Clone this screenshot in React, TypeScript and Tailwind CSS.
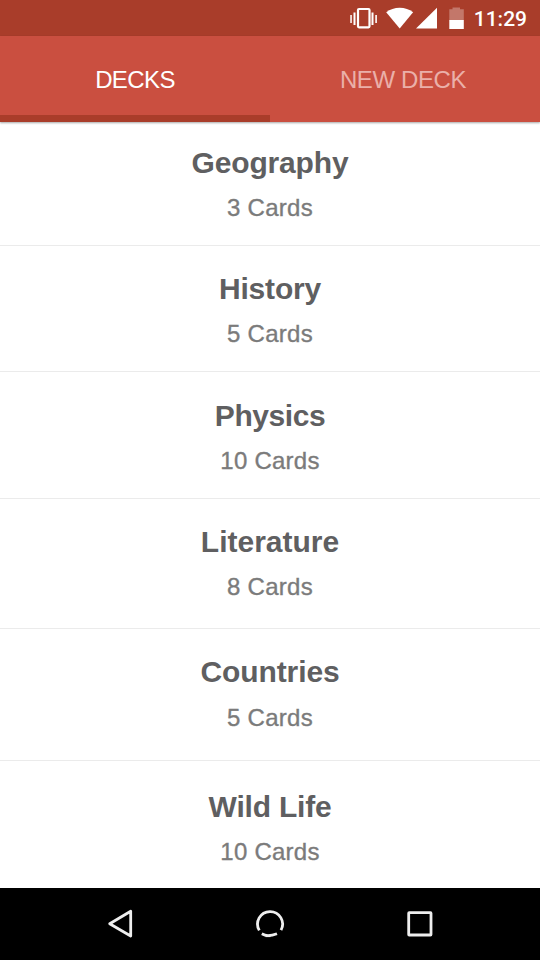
type Deck = { name: string; count: number; row: string; gap: string; title: string };

const decks: Deck[] = [
  { name: "Geography", count: 3, row: "h-[124px] pt-[26px]", gap: "mt-[18px]", title: "tracking-[-0.15px]" },
  { name: "History", count: 5, row: "h-[126px] pt-[28px]", gap: "mt-[18px]", title: "tracking-[-0.2px]" },
  { name: "Physics", count: 10, row: "h-[127px] pt-[29px]", gap: "mt-[18px]", title: "tracking-[-0.45px]" },
  { name: "Literature", count: 8, row: "h-[130px] pt-[28px]", gap: "mt-[18px]", title: "tracking-[0px]" },
  { name: "Countries", count: 5, row: "h-[132px] pt-[28px]", gap: "mt-[19px]", title: "tracking-[-0.1px]" },
  { name: "Wild Life", count: 10, row: "h-[127px] pt-[31px] border-b-0", gap: "mt-[18px]", title: "tracking-[-0.2px]" },
];

function StatusBar() {
  return (
    <div className="flex h-9 items-center justify-end bg-[#a93d2a] pr-[13px]">
      <svg width="118" height="36" viewBox="348 0 118 36" fill="#fff" className="mr-[8px]">
        <path d="M350.300 15h1.500v8h-1.500zM353.500 12.500h2v12.500h-2zM371.500 12.500h2v12.500h-2zM375.300 15h1.600v8h-1.600z" />
        <rect x="358" y="9" width="11.500" height="18.300" rx="1" fill="none" stroke="#fff" strokeWidth="2.200" />
        <path d="M386.200 12.200C393.500 6.200 405.900 6.200 413.100 12.200L399.700 28.500Z" />
        <path d="M437 7.800V28.500H416Z" />
        <path d="M449.300 9.300h3.200V7.400h7.500v1.900h3.800v11h-14.500z" opacity=".3" />
        <path d="M449.300 20h14.500v9h-14.500z" />
      </svg>
      <span className="pt-[2px] font-[Roboto] text-[21px] leading-6 font-medium text-white">11:29</span>
    </div>
  );
}

function Tabs() {
  return (
    <div className="relative z-10 flex h-[86px] bg-[#ca4f40] text-[24px] leading-6 shadow-[0_1px_2px_rgba(0,0,0,0.35)]">
      <div className="h-full w-1/2 border-b-[7px] border-[#a93d2a] pt-8 text-center tracking-[-0.6px] text-white">DECKS</div>
      <div className="h-full w-1/2 pt-8 pr-[4px] text-center tracking-[-0.4px] text-[#eab0a9]">NEW DECK</div>
    </div>
  );
}

function NavigationBar() {
  return (
    <div className="flex h-[72px] items-center justify-center bg-black">
      <svg width="540" height="72" viewBox="0 888 540 72" fill="none" stroke="#eee" strokeWidth="2.800">
        <path d="M130.700 911.200V936L109.700 923.700Z" strokeLinejoin="round" />
        <path d="M259.300 930.400A12.500 12.500 0 1 1 281 930.100" />
        <path d="M261.800 933.700Q265 935.400 268 935.600Q272 935.500 277 933.700" />
        <path d="M265.500 936.200H270.500" strokeWidth="1.800" />
        <rect x="408.700" y="912.700" width="22.300" height="22.300" rx=".5" />
      </svg>
    </div>
  );
}

export default function App() {
  return (
    <div className="flex h-[960px] w-[540px] flex-col overflow-hidden bg-white font-['Liberation_Sans',Arial,sans-serif]">
      <StatusBar />
      <Tabs />
      <div className="flex flex-col">
        {decks.map((deck) => (
          <div key={deck.name} className={`border-b border-[#ebebeb] text-center ${deck.row}`}>
            <div className={`text-[30px] leading-[30px] font-bold text-[#5f5f61] ${deck.title}`}>{deck.name}</div>
            <div className={`text-[24px] leading-6 tracking-[0.25px] text-[#7b7b7b] [-webkit-text-stroke:0.35px_#7b7b7b] ${deck.gap}`}>{deck.count} Cards</div>
          </div>
        ))}
      </div>
      <NavigationBar />
    </div>
  );
}
